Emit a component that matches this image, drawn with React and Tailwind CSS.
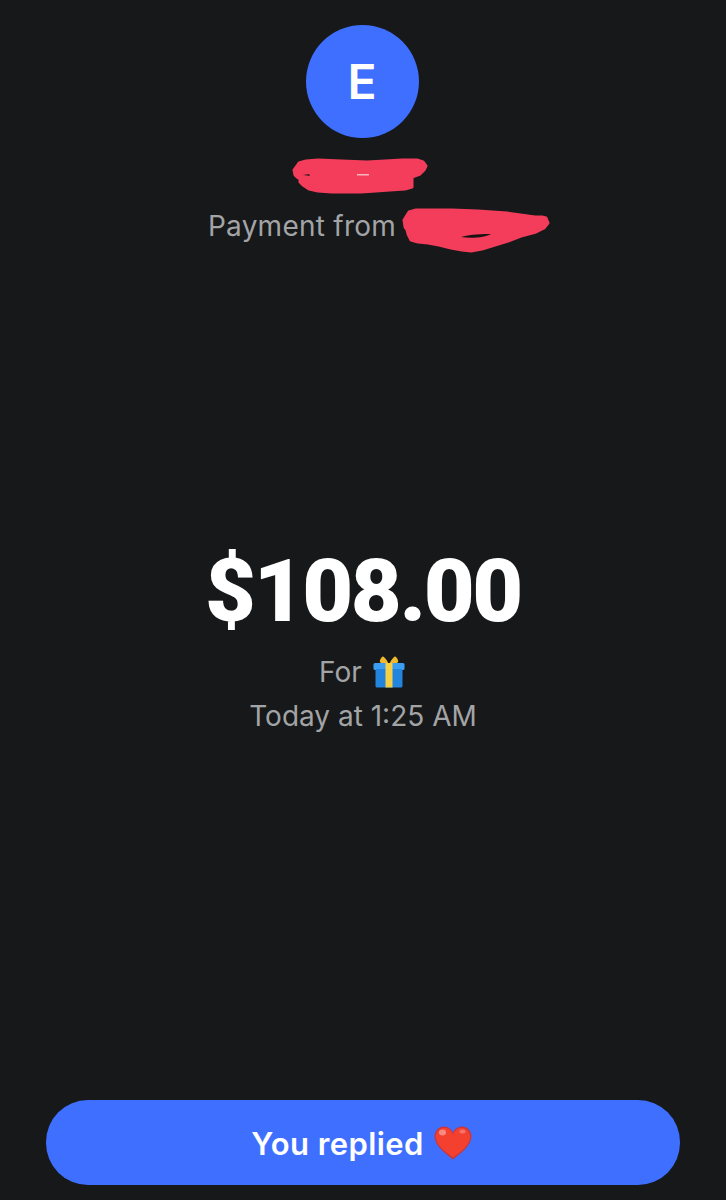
function GiftIcon() {
  return (
    <svg viewBox="0 0 32 32" className="h-8 w-8 shrink-0">
      <path d="M15.5 8C12 8 7 7.5 6.8 5.5 7 3 9 0.5 10 0.5 11.5 1 14.5 4.5 15.5 8Z" fill="#f2b92c" />
      <path d="M16.5 8C20 8 25 7.5 25.2 5.5 25 3 23 0.5 22 0.5 20.5 1 17.5 4.5 16.5 8Z" fill="#f2b92c" />
      <rect x="0.5" y="7" width="31" height="7" rx="1.5" fill="#3b9df0" />
      <rect x="2.5" y="13" width="27" height="18.5" rx="1.5" fill="#2284dc" />
      <rect x="12.5" y="7" width="7" height="24.5" fill="#f7cf45" />
    </svg>
  )
}

function HeartIcon() {
  return (
    <svg viewBox="0 0 38 34" className="h-[34px] w-[38px] shrink-0">
      <path d="M19 33.5C13 28.5 1 21 0.5 10.5 0.5 4.5 5 0.5 10 0.5 14 0.5 17.5 3 19 6.5 20.5 3 24 0.5 28 0.5 33 0.5 37.5 4.5 37.5 10.5 37 21 25 28.5 19 33.5Z" fill="#c9363a" />
      <path d="M19 31.5C13.5 27 2 20 1.8 10.5 2 5.5 6 1.8 10.2 1.8 14 1.8 17.5 4.5 19 8.5 20.5 4.5 24 1.8 27.8 1.8 32 1.8 36 5.5 36.2 10.5 36 20 24.5 27 19 31.5Z" fill="#f4402f" />
      <ellipse cx="8.5" cy="6.5" rx="3.5" ry="3" fill="#f88a84" />
      <ellipse cx="28.5" cy="5.5" rx="3" ry="2" fill="#f7736a" />
    </svg>
  )
}

function ScribbleName() {
  return (
    <svg viewBox="0 0 136 36" className="h-9 w-[136px]">
      <path
        d="M2 12L7 5L14 3L26 2L50 3L75 4L93 3L110 2L125 2L131 4L134 8L132 12L128 16L120 19L120 24L120 29L113 31L98 32L84 33L69 34L55 34L40 34L26 33L17 31L11 27L8 24L8 21L5 19L3 17Z"
        fill="#f33d5b"
        stroke="#f33d5b"
        strokeWidth="3"
        strokeLinejoin="round"
      />
      <rect x="65" y="16" width="12" height="1.5" fill="#f7b7c0" />
      <path d="M11 17 17 16 18 18Z" fill="#3a1a22" />
    </svg>
  )
}

function ScribbleSender() {
  return (
    <svg viewBox="0 0 148 46" className="h-[46px] w-[148px] shrink-0">
      <path
        d="M2 13L7 5L14 3L26 3L50 3L76 4L105 6L133 10L140 10L144 11L146 16L142 21L134 25L119 29L106 34L93 38L80 42L69 44L60 43L49 41L37 38L26 36L16 35L9 33L6 27L5 23L3 20Z"
        fill="#f33d5b"
        stroke="#f33d5b"
        strokeWidth="3"
        strokeLinejoin="round"
      />
      <path d="M59 30C70 27 80 27 89 27 84 30 70 32 59 30Z" fill="#1a1315" />
    </svg>
  )
}

export default function App() {
  return (
    <div className="flex h-[1200px] flex-col items-center bg-[#16181a] font-['Inter',sans-serif] text-white">
      <div className="mt-[25px] mr-[2px] flex h-[113px] w-[113px] items-center justify-center rounded-full bg-[#3f6fff] text-[48px] font-semibold">
        E
      </div>
      <div className="mt-5 mr-[6px]">
        <ScribbleName />
      </div>
      <div className="mt-[5px] mr-[-32px] flex items-center text-[28px] tracking-[0.25px] text-[#a3a4a6]">
        <span>Payment from</span>
        <div className="mt-2 ml-[6px]">
          <ScribbleSender />
        </div>
      </div>
      <div className="mt-[285px] font-['Roboto',sans-serif] text-[88px] leading-[105px] font-black tracking-[-2.4px]">
        $108.00
      </div>
      <div className="mt-[9px] mr-[2px] flex items-center gap-[11px] text-[28px] leading-[40px] text-[#a3a4a6]">
        <span>For</span>
        <GiftIcon />
      </div>
      <div className="mt-[4px] text-[28px] leading-[40px] text-[#a3a4a6]">Today at 1:25 AM</div>
      <div className="mt-auto mb-[15px] flex h-[85px] w-[634px] items-center justify-center gap-[10px] rounded-[42px] bg-[#3f6fff] pr-[3px] text-[31px] font-semibold tracking-[0.4px]">
        <span className="mt-[3px]">You replied</span>
        <HeartIcon />
      </div>
    </div>
  )
}
